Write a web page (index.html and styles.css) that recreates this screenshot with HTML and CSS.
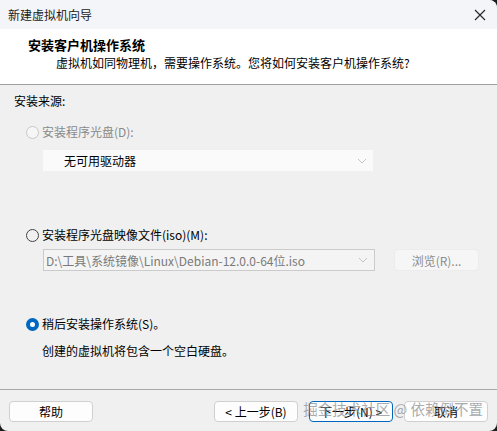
FILE: index.html
```html
<!DOCTYPE html>
<html lang="zh-CN">
<head>
  <meta charset="UTF-8" />
  <title>新建虚拟机向导</title>
  <link rel="stylesheet" href="styles.css">
</head>
<body>

  <div class="window">
    <div class="titlebar">
      <span>新建虚拟机向导</span>
      <svg class="close" width="12" height="12" viewBox="0 0 12 12">
        <path d="M1 1L11 11M11 1L1 11" stroke="#222" stroke-width="1.1" fill="none"/>
      </svg>
    </div>

    <div class="header">
      <div class="header-title">安装客户机操作系统</div>
      <div class="header-sub">虚拟机如同物理机，需要操作系统。您将如何安装客户机操作系统?</div>
    </div>

    <div class="content">
      <div class="source-label">安装来源:</div>

      <div class="radio-row disabled row-disc">
        <span class="radio"></span>
        <span>安装程序光盘(D):</span>
      </div>
      <div class="combo combo-disc">
        <span class="combo-text">无可用驱动器</span>
        <svg class="chevron" width="10" height="6" viewBox="0 0 10 6"><path d="M1 1L5 5L9 1" stroke="#c4c4c4" fill="none"/></svg>
      </div>

      <div class="radio-row row-iso">
        <span class="radio"></span>
        <span>安装程序光盘映像文件(iso)(M):</span>
      </div>
      <div class="iso-line">
        <div class="combo combo-iso">
          <span class="combo-text">D:\工具\系统镜像\Linux\Debian-12.0.0-64位.iso</span>
          <svg class="chevron" width="10" height="6" viewBox="0 0 10 6"><path d="M1 1L5 5L9 1" stroke="#c4c4c4" fill="none"/></svg>
        </div>
        <button class="btn btn-browse" disabled>浏览(R)...</button>
      </div>

      <div class="radio-row row-later">
        <span class="radio checked"></span>
        <span>稍后安装操作系统(S)。</span>
      </div>
      <div class="later-desc">创建的虚拟机将包含一个空白硬盘。</div>
    </div>

    <div class="footer">
      <button class="btn">帮助</button>
      <div class="footer-right">
        <button class="btn">&lt; 上一步(B)</button>
        <button class="btn btn-focus">下一步(N) &gt;</button>
        <button class="btn">取消</button>
      </div>
      <div class="watermark">掘金技术社区 @ 依赖倒不置</div>
    </div>
  </div>

</body>
</html>
```

FILE: styles.css
```css
body {
  margin: 0;
  background: #1c1c1c;
  font-family: "Noto Sans CJK SC", "Noto Sans", sans-serif;
  font-size: 12px;
  color: #000;
}
.window {
  width: 497px;
  height: 431px;
  background: #f0f0f0;
  border-radius: 0 8px 8px 8px;
  overflow: hidden;
  display: flex;
  flex-direction: column;
}
.titlebar {
  height: 29px;
  background: #f3f5f8;
  display: flex;
  align-items: center;
  justify-content: space-between;
  padding: 0 11px 0 8px;
  font-size: 12px;
  color: #1a1a1a;
}
.close {
  display: block;
}
.header {
  height: 56px;
  box-sizing: border-box;
  background: #fff;
  padding: 7px 28px 0;
  border-bottom: 1px solid #a0a0a0;
}
.header-title {
  font-size: 13px;
  font-weight: bold;
  line-height: 18px;
}
.header-sub {
  margin-left: 28px;
  line-height: 17px;
}
.content {
  height: 305px;
  box-sizing: border-box;
  padding: 8px 14px 0;
  border-bottom: 1px solid #a8a8a8;
}
.source-label {
  line-height: 16px;
}
.radio-row {
  display: flex;
  align-items: center;
  gap: 3px;
  margin-left: 12px;
  height: 18px;
  line-height: 18px;
}
.radio-row.disabled {
  color: #8a8a8a;
}
.row-disc {
  margin-top: 14px;
}
.row-iso {
  margin-top: 55px;
}
.row-later {
  margin-top: 44px;
}
.radio {
  width: 11px;
  height: 11px;
  border: 1px solid #444;
  border-radius: 50%;
  box-sizing: content-box;
  flex: none;
}
.disabled .radio {
  border-color: #c8c8c8;
  background: #f6f6f6;
}
.radio.checked {
  width: 5px;
  height: 5px;
  border: 4px solid #0067c0;
  background: #fff;
}
.combo {
  display: flex;
  align-items: center;
  justify-content: space-between;
  box-sizing: border-box;
  padding: 0 6px 0 2px;
}
.combo-disc {
  width: 330px;
  height: 21px;
  margin: 9px 0 0 29px;
  background: #fafafa;
}
.combo-disc .combo-text {
  padding-left: 19px;
}
.iso-line {
  display: flex;
  align-items: center;
  margin: 5px 0 0 29px;
}
.combo-iso {
  width: 332px;
  height: 22px;
  border: 1px solid #cbcbcb;
  background: #f4f4f4;
  color: #7a7a7a;
}
.chevron {
  display: block;
}
.later-desc {
  margin: 10px 0 0 28px;
  line-height: 16px;
}
.btn {
  width: 84px;
  height: 21px;
  box-sizing: border-box;
  border: 1px solid #d0d0d0;
  border-radius: 4px;
  background: #fdfdfd;
  font-family: inherit;
  font-size: 12px;
  color: #000;
  padding: 0;
}
.btn-browse {
  width: 85px;
  height: 22px;
  margin-left: 19px;
  border-color: #ececec;
  background: #f6f6f6;
  color: #8c8c8c;
}
.btn-focus {
  border-color: #0067c0;
}
.footer {
  position: relative;
  flex: 1;
  display: flex;
  align-items: flex-start;
  justify-content: space-between;
  padding: 11px 9px 0;
}
.footer-right {
  display: flex;
  gap: 11px;
}
.watermark {
  position: absolute;
  right: 14px;
  top: 8px;
  font-size: 14.5px;
  color: rgba(130, 134, 140, 0.7);
  pointer-events: none;
}
```
